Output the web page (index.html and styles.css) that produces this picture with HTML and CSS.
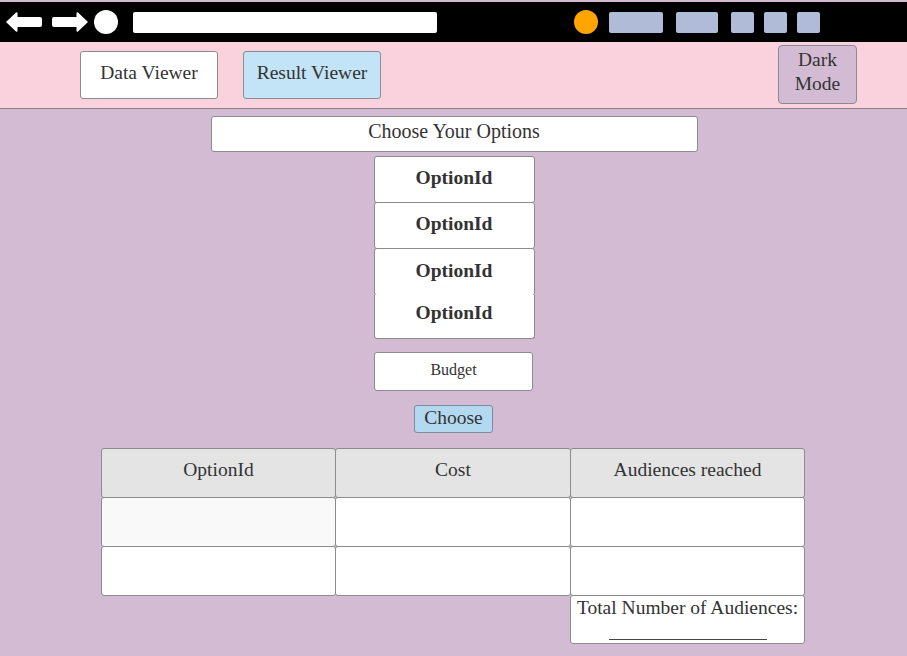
FILE: index.html
```html
<!DOCTYPE html>
<html>
<head>
<meta charset="utf-8">
<link rel="stylesheet" href="styles.css">
</head>
<body>
<div class="browser">
  <div class="toolbar">
    <svg class="nav-icon" width="38" height="22" viewBox="0 0 38 22"><path d="M1 11 L11 1.5 Q12.5 0.5 12.5 2.5 L12.5 6 L35 6 Q37 6 37 8 L37 14 Q37 16 35 16 L12.5 16 L12.5 19.5 Q12.5 21.5 11 20.5 Z" fill="#fff"/></svg>
    <svg class="nav-icon" width="38" height="22" viewBox="0 0 38 22"><path d="M37 11 L27 1.5 Q25.5 0.5 25.5 2.5 L25.5 6 L3 6 Q1 6 1 8 L1 14 Q1 16 3 16 L25.5 16 L25.5 19.5 Q25.5 21.5 27 20.5 Z" fill="#fff"/></svg>
    <span class="reload"></span>
    <span class="urlbar"></span>
    <span class="avatar"></span>
    <span class="tb-btn wide"></span>
    <span class="tb-btn mid"></span>
    <span class="tb-btn small"></span>
    <span class="tb-btn small"></span>
    <span class="tb-btn small"></span>
  </div>
  <header class="appbar">
    <button class="tab">Data Viewer</button>
    <button class="tab active">Result Viewer</button>
    <button class="dark">Dark<br>Mode</button>
  </header>
  <main class="content">
    <div class="title">Choose Your Options</div>
    <div class="options">
      <div class="opt o1">OptionId</div>
      <div class="opt o2">OptionId</div>
      <div class="opt o3">OptionId</div>
      <div class="opt o4">OptionId</div>
    </div>
    <div class="budget">Budget</div>
    <button class="choose">Choose</button>
    <div class="grid">
      <div class="cell head">OptionId</div>
      <div class="cell head">Cost</div>
      <div class="cell head">Audiences reached</div>
      <div class="cell shade"></div>
      <div class="cell"></div>
      <div class="cell"></div>
      <div class="cell"></div>
      <div class="cell"></div>
      <div class="cell"></div>
      <div class="blank"></div>
      <div class="blank"></div>
      <div class="cell total">Total Number of Audiences:<br><span class="line"></span></div>
    </div>
  </main>
</div>
</body>
</html>
```

FILE: styles.css
```css
* { box-sizing: border-box; }
html, body { margin: 0; padding: 0; }
body {
  font-family: "Liberation Serif", "Times New Roman", serif;
  color: #333;
  background: #d3bbd3;
  width: 907px;
  height: 656px;
  overflow: hidden;
}
.browser { display: flex; flex-direction: column; }
.toolbar {
  margin-top: 2px;
  height: 40px;
  background: #000;
  display: flex;
  align-items: center;
  padding-left: 5px;
}
.nav-icon { display: block; margin-right: 8px; }
.nav-icon + .nav-icon { margin-right: 5px; }
.reload { width: 24px; height: 24px; border-radius: 50%; background: #fff; margin-right: 15px; }
.urlbar { width: 304px; height: 21px; background: #fff; border-radius: 2px; margin-right: 137px; }
.avatar { width: 24px; height: 24px; border-radius: 50%; background: #ffa500; margin-right: 11px; }
.tb-btn { height: 21px; background: #b0bcd7; border-radius: 2px; }
.tb-btn.wide { width: 54px; margin-right: 13px; }
.tb-btn.mid { width: 42px; margin-right: 13px; }
.tb-btn.small { width: 23px; margin-right: 10px; }
.appbar {
  height: 67px;
  background: #fad2de;
  border-bottom: 1px solid #8a7f8a;
  display: flex;
  align-items: flex-start;
  padding: 9px 50px 0 80px;
}
button { font-family: inherit; color: #333; cursor: pointer; }
.tab {
  width: 138px;
  height: 48px;
  background: #fff;
  border: 1px solid #8c8c8c;
  border-radius: 3px;
  font-size: 19.5px;
  margin-right: 25px;
  padding: 0 0 4px 0;
}
.tab.active { background: #c2e4f6; }
.dark {
  margin-left: auto;
  margin-top: -6px;
  width: 79px;
  height: 59px;
  background: #d3bbd3;
  border: 1px solid #8c8c8c;
  border-radius: 4px;
  font-size: 19.5px;
  line-height: 24px;
  padding: 0 0 6px 0;
}
.content {
  display: flex;
  flex-direction: column;
  align-items: center;
  padding-top: 7px;
}
.title {
  width: 487px;
  height: 36px;
  margin-left: 1px;
  background: #fff;
  border: 1px solid #8c8c8c;
  border-radius: 3px;
  font-size: 20px;
  text-align: center;
  line-height: 29px;
}
.options { margin-top: 4px; width: 161px; margin-left: 1px; display: flex; flex-direction: column; }
.opt {
  background: #fff;
  border: 1px solid #8c8c8c;
  border-radius: 3px;
  font-weight: bold;
  font-size: 19.5px;
  text-align: center;
}
.o1 { height: 47px; line-height: 42px; }
.o2 { height: 47px; line-height: 42px; margin-top: -1px; }
.o3 { height: 48px; line-height: 44px; margin-top: -1px; }
.o4 { height: 44px; line-height: 36px; margin-top: -1px; border-top: none; border-radius: 0 0 3px 3px; }
.budget {
  margin-top: 13px;
  width: 159px;
  height: 39px;
  background: #fff;
  border: 1px solid #8c8c8c;
  border-radius: 3px;
  font-size: 16px;
  text-align: center;
  line-height: 34px;
}
.choose {
  margin-top: 14px;
  width: 79px;
  height: 28px;
  background: #b3d9f1;
  border: 1px solid #7f8c99;
  border-radius: 3px;
  font-size: 19.5px;
  line-height: 22px;
  padding: 0 0 3px 0;
}
.grid {
  margin-top: 15px;
  margin-left: -2px;
  display: grid;
  grid-template-columns: 234px 235px 234px;
  grid-auto-rows: 49px;
}
.cell {
  background: #fff;
  border: 1px solid #8c8c8c;
  border-radius: 3px;
  margin: 0 -1px -1px 0;
  font-size: 19.5px;
  text-align: center;
}
.cell.head { background: #e4e4e4; line-height: 42px; }
.cell.shade { background: #f9f9f9; }
.cell.total { font-size: 19.5px; line-height: 24px; height: 49px; }
.line { display: inline-block; width: 158px; border-bottom: 1px solid #444; height: 20px; vertical-align: top; }
```
